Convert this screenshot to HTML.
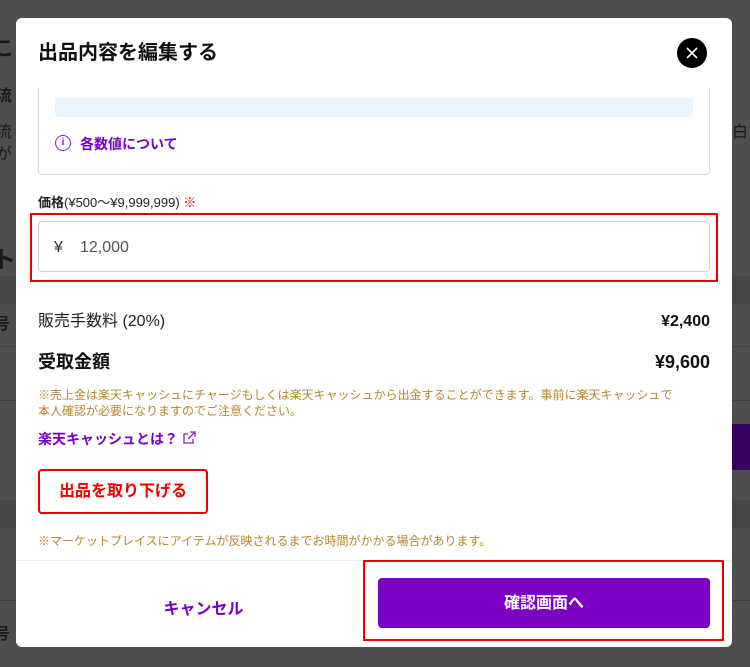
<!DOCTYPE html>
<html><head><meta charset="utf-8"><style>
*{margin:0;padding:0;box-sizing:border-box}
body{width:750px;height:667px;overflow:hidden;background:#4e4e4e;font-family:"Liberation Sans","Noto Sans CJK JP",sans-serif;position:relative}
.a{position:absolute;white-space:nowrap}
.bg{color:#1a1a1a;font-weight:bold}
</style></head><body>
<div class="a" style="left:0;top:276px;width:750px;height:28px;background:#474747"></div>
<div class="a" style="left:0;top:346px;width:750px;height:1px;background:#3e3e3e"></div>
<div class="a" style="left:0;top:400px;width:750px;height:1px;background:#3e3e3e"></div>
<div class="a" style="left:0;top:500px;width:750px;height:28px;background:#474747"></div>
<div class="a" style="left:0;top:600px;width:750px;height:1px;background:#3e3e3e"></div>
<div class="a" style="left:726px;top:424px;width:24px;height:46px;background:#3a0060"></div>
<div class="a bg" style="left:-6px;top:32px;font-size:20px">こ</div>
<div class="a bg" style="left:-4px;top:82px;font-size:16px">流</div>
<div class="a bg" style="left:-4px;top:118px;font-size:16px;font-weight:normal">流</div>
<div class="a bg" style="left:-4px;top:140px;font-size:16px;font-weight:normal">が</div>
<div class="a bg" style="left:-8px;top:240px;font-size:24px">ト</div>
<div class="a bg" style="left:-6px;top:310px;font-size:16px">号</div>
<div class="a bg" style="left:-6px;top:620px;font-size:16px">号</div>
<div class="a bg" style="left:732px;top:118px;font-size:16px;font-weight:normal">白な</div>

<div class="a" style="left:16px;top:18px;width:716px;height:629px;background:#fff;border-radius:6px;overflow:hidden">
<div class="a" style="left:22px;top:18px;font-size:20px;font-weight:bold;color:#111">出品内容を編集する</div>
<div class="a" style="left:661px;top:20px;width:30px;height:30px;border-radius:50%;background:#000">
<svg width="30" height="30" viewBox="0 0 30 30"><path d="M10 10L20 20M20 10L10 20" stroke="#fff" stroke-width="1.6"/></svg></div>
<div class="a" style="left:22px;top:70px;width:672px;height:87px;border:1px solid #d6d6d6;border-top:none;border-radius:0 0 4px 4px"></div>
<div class="a" style="left:39px;top:80px;width:638px;height:19px;background:#e8f5fd;border-radius:0 0 4px 4px"></div>
<div class="a" style="left:39px;top:117px;width:16px;height:16px;border:1.5px solid #8a1fd0;border-radius:50%;color:#8a1fd0;font-size:10px;font-weight:bold;text-align:center;line-height:13px">i</div>
<div class="a" style="left:64px;top:116px;font-size:14px;font-weight:bold;color:#7a00c4">各数値について</div>
<div class="a" style="left:22px;top:174px;font-size:13px;color:#222"><b>価格</b>(¥500〜¥9,999,999) <span style="color:#e00">※</span></div>
<div class="a" style="left:14px;top:195px;width:688px;height:69px;border:2px solid #e00"></div>
<div class="a" style="left:22px;top:203px;width:672px;height:51px;border:1px solid #d0d0d0;border-radius:4px"></div>
<div class="a" style="left:38px;top:221px;font-size:16px;color:#333">¥</div>
<div class="a" style="left:64px;top:221px;font-size:16px;color:#555">12,000</div>
<div class="a" style="left:22px;top:294px;font-size:16px;line-height:20px;color:#222">販売手数料 (20%)</div>
<div class="a" style="right:22px;top:294px;font-size:16px;line-height:20px;font-weight:bold;color:#111">¥2,400</div>
<div class="a" style="left:22px;top:333px;font-size:18px;line-height:22px;font-weight:bold;color:#111">受取金額</div>
<div class="a" style="right:22px;top:333px;font-size:18px;line-height:22px;font-weight:bold;color:#111">¥9,600</div>
<div class="a" style="left:22px;top:369px;font-size:12px;line-height:16px;color:#b5862a">※売上金は楽天キャッシュにチャージもしくは楽天キャッシュから出金することができます。事前に楽天キャッシュで<br>本人確認が必要になりますのでご注意ください。</div>
<div class="a" style="left:22px;top:411px;font-size:14px;font-weight:bold;color:#7a00c4">楽天キャッシュとは？ <svg width="14" height="14" viewBox="0 0 14 14" style="vertical-align:-1px"><path d="M11 8v4H2V3h4M8 1h5v5M13 1L6 8" fill="none" stroke="#8a1fd0" stroke-width="1.3"/></svg></div>
<div class="a" style="left:22px;top:451px;width:170px;height:45px;border:2px solid #e00;border-radius:4px;color:#e00;font-size:16px;font-weight:bold;text-align:center;line-height:41px">出品を取り下げる</div>
<div class="a" style="left:22px;top:514px;font-size:12px;color:#b5862a">※マーケットプレイスにアイテムが反映されるまでお時間がかかる場合があります。</div>
<div class="a" style="left:0;top:542px;width:716px;height:1px;background:#eee"></div>
<div class="a" style="left:0;top:577px;width:375px;text-align:center;font-size:16px;font-weight:bold;color:#7a00c4">キャンセル</div>
<div class="a" style="left:347px;top:542px;width:361px;height:81px;border:2px solid #e00"></div>
<div class="a" style="left:362px;top:560px;width:332px;height:50px;background:#7b00c4;border-radius:4px;color:#fff;font-size:16px;font-weight:bold;text-align:center;line-height:52px">確認画面へ</div>
</div>
</body></html>
